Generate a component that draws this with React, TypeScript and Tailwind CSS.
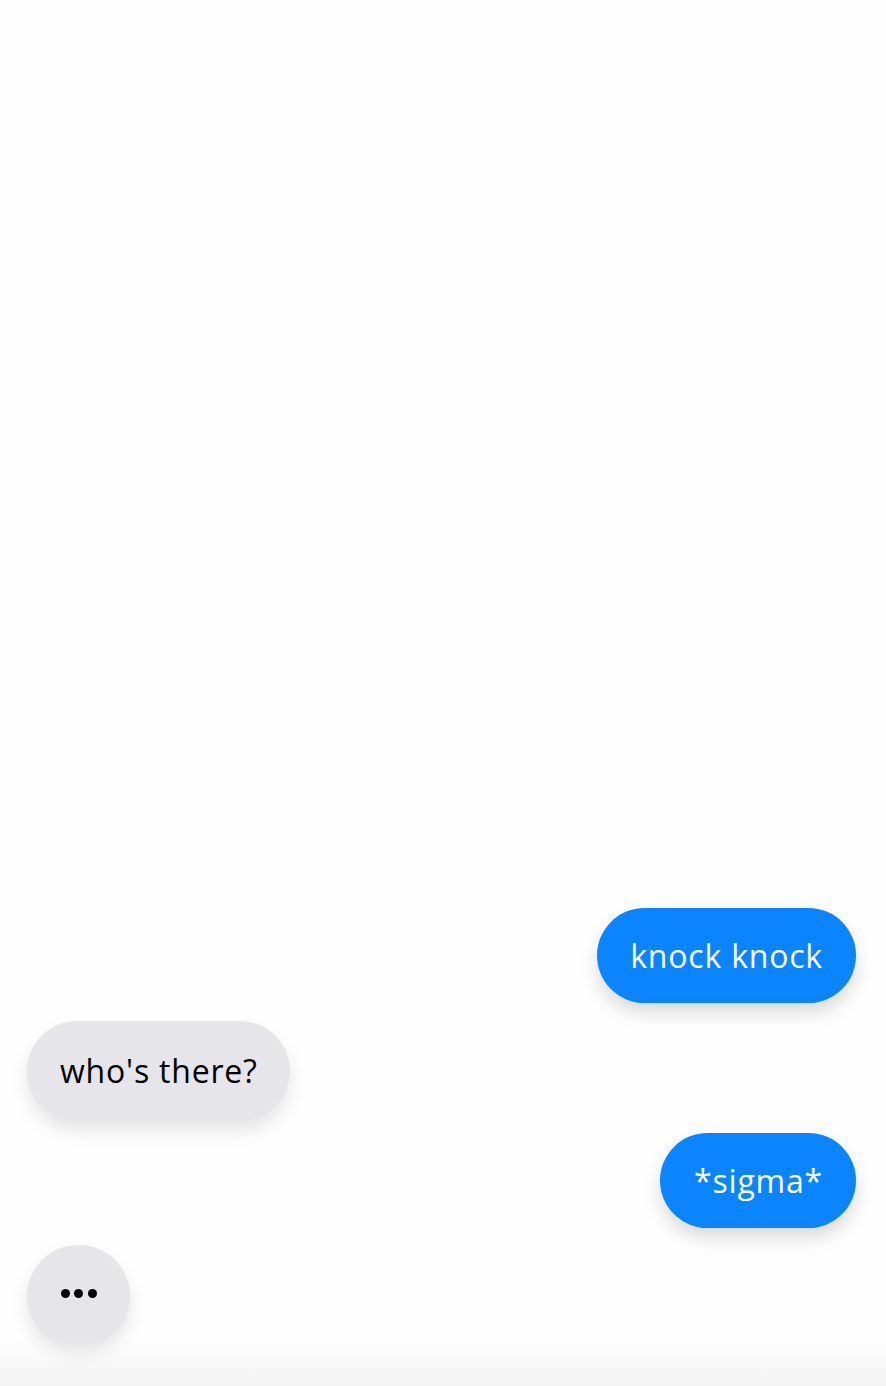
import React from "react";

const font = { fontFamily: '"Open Sans", "Noto Sans", sans-serif' };

export default function App() {
  return (
    <div
      className="relative h-[1386px] w-full overflow-hidden bg-[#fefefe] flex flex-col justify-end"
      style={font}
    >
      <div className="flex flex-col px-[29px] pb-[39px]">
        <div className="flex justify-end pr-[1px]">
          <div className="flex h-[95px] items-center rounded-full bg-[#0a84ff] pl-[33px] pr-[33px] text-[32px] font-medium tracking-[0.8px] text-white shadow-[0_10px_18px_rgba(0,0,0,0.14)]">
            knock knock
          </div>
        </div>
        <div className="mt-[18px] flex justify-start">
          <div className="-ml-[2px] flex h-[100px] items-center rounded-full bg-[#e5e5ea] pl-[33px] pr-[32px] text-[32px] tracking-[0.8px] text-black shadow-[0_10px_18px_rgba(0,0,0,0.10)]">
            who's there?
          </div>
        </div>
        <div className="mt-[12px] flex justify-end pr-[1px]">
          <div className="flex h-[95px] items-center rounded-full bg-[#0a84ff] pl-[34px] pr-[33px] text-[32px] font-medium tracking-[0.8px] text-white shadow-[0_10px_18px_rgba(0,0,0,0.14)]">
            *sigma*
          </div>
        </div>
        <div className="mt-[17px] flex justify-start">
          <div className="-ml-[2px] flex h-[102px] w-[103px] items-center justify-center gap-[4.5px] rounded-full bg-[#e5e5ea] pb-[6px] shadow-[0_10px_18px_rgba(0,0,0,0.10)]">
            <span className="h-[9px] w-[9px] rounded-full bg-black" />
            <span className="h-[9px] w-[9px] rounded-full bg-black" />
            <span className="h-[9px] w-[9px] rounded-full bg-black" />
          </div>
        </div>
      </div>
      <div className="pointer-events-none absolute bottom-0 left-0 h-[50px] w-full bg-gradient-to-b from-transparent to-[#f3f3f3]" />
    </div>
  );
}
